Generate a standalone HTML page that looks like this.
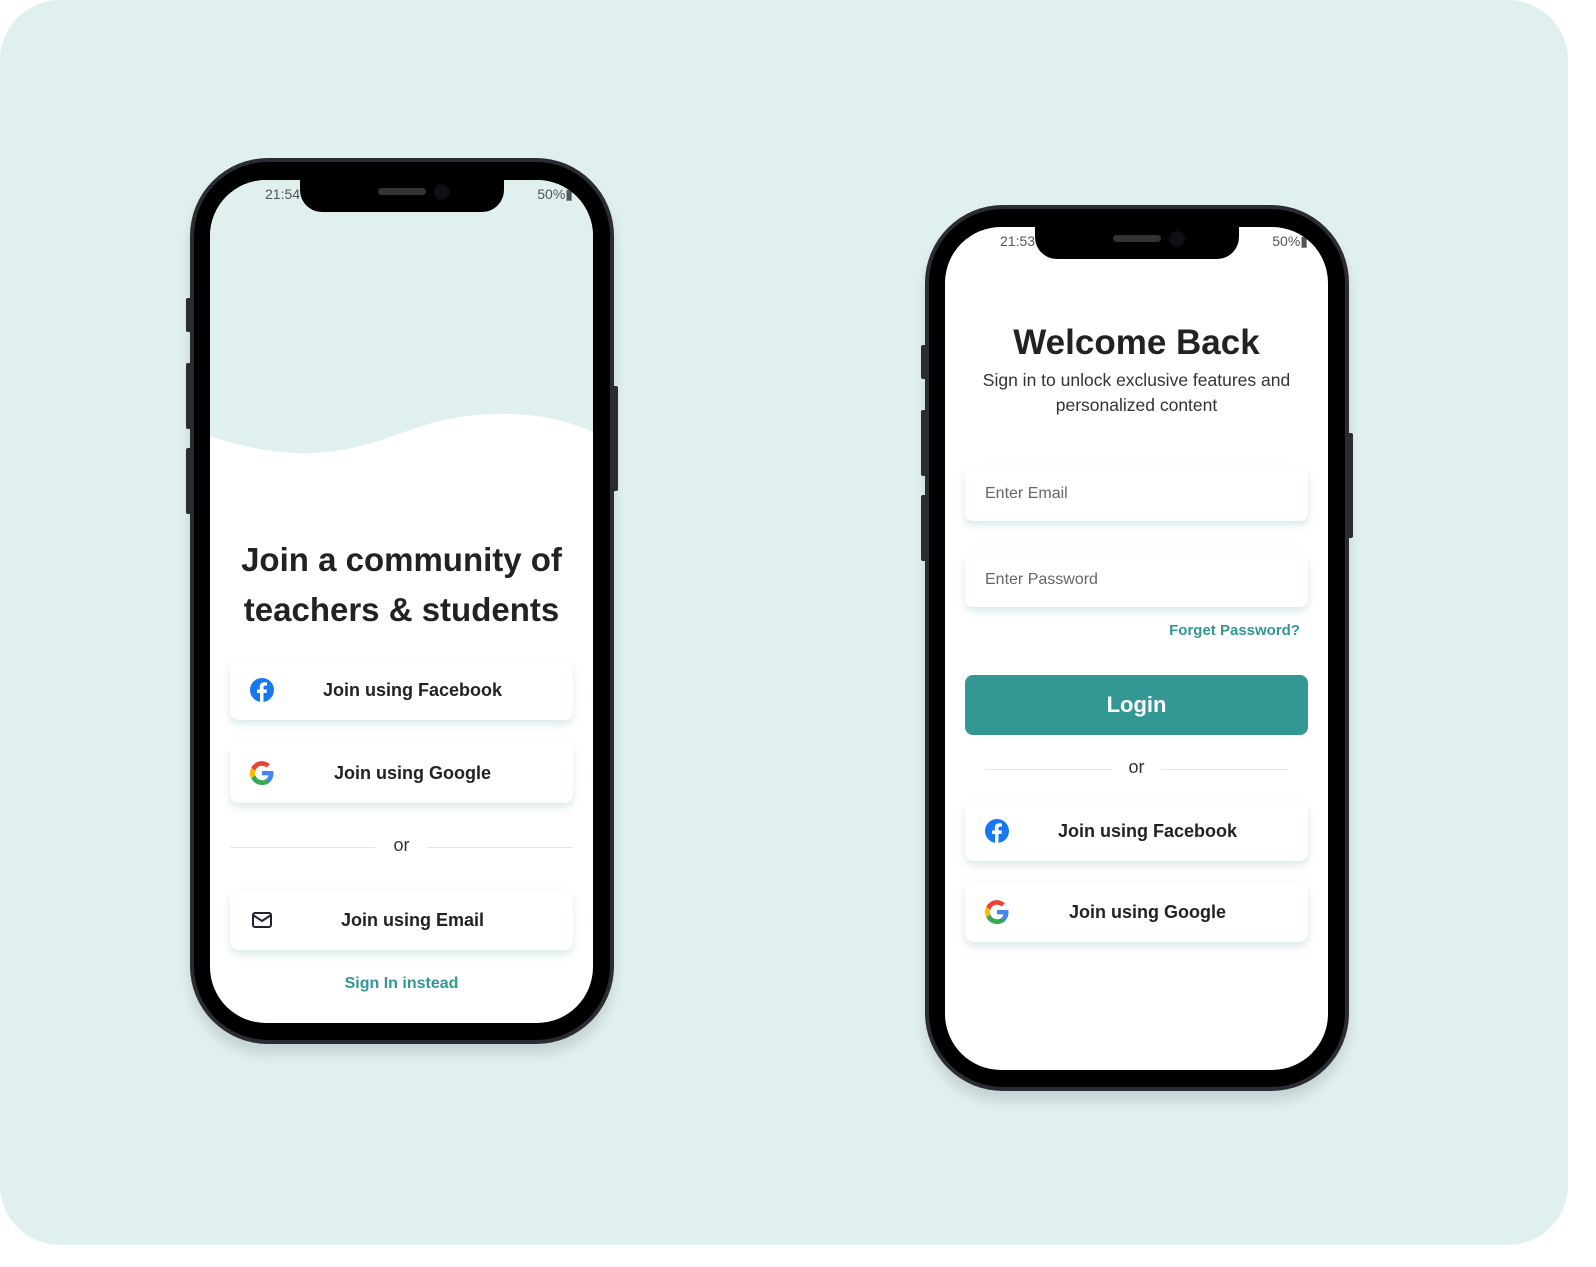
<!DOCTYPE html>
<html><head><meta charset="utf-8"><style>
*{margin:0;padding:0;box-sizing:border-box}
body{width:1596px;height:1267px;background:#fff;font-family:"Liberation Sans",sans-serif;position:relative;overflow:hidden}
.bg{position:absolute;left:0;top:0;width:1568px;height:1245px;background:#e0f0ef;border-radius:60px}
.phone{position:absolute;width:424px;height:886px;border-radius:78px;background:#2b2b33;box-shadow:0 10px 12px rgba(0,0,0,.12)}
.bezel{position:absolute;left:4px;top:4px;right:4px;bottom:4px;border-radius:74px;background:#000}
.screen{position:absolute;left:20px;top:22px;width:383px;height:843px;border-radius:56px;background:#fff;overflow:hidden}
.notch{position:absolute;left:90px;top:0;width:204px;height:32px;background:#000;border-radius:0 0 22px 22px}
.spk{position:absolute;left:78px;top:8px;width:48px;height:7px;border-radius:4px;background:#333}
.cam{position:absolute;left:134px;top:4px;width:16px;height:16px;border-radius:50%;background:#111;border:3px solid #0e0e16}
.time{position:absolute;left:55px;top:6px;font-size:14px;color:#555}
.stat{position:absolute;right:20px;top:6px;font-size:14px;color:#555}
.btn{position:absolute;left:20px;width:343px;height:60px;background:#fff;border-radius:9px;box-shadow:0 4px 8px rgba(150,190,190,.35);font-size:18px;font-weight:bold;color:#222;text-align:center;line-height:60px}
.btn svg{position:absolute;left:20px;top:18px}
.btn span{padding-left:22px}
.or{position:absolute;left:20px;width:343px;text-align:center;font-size:18px;color:#333}
.or:before,.or:after{content:"";position:absolute;top:12px;width:145px;height:1px;background:#e5e5e5}
.or:before{left:0}.or:after{right:0}
.or2:before,.or2:after{width:127px}
.inp{position:absolute;left:20px;width:343px;height:54px;background:#fff;border-radius:8px;box-shadow:0 4px 8px rgba(150,190,190,.35);font-size:16px;color:#666;line-height:54px;padding-left:20px}
.btns{position:absolute;width:6px;background:#2b2b33;border-radius:2px}
</style></head><body>
<div class="bg"></div>

<div class="phone" style="left:190px;top:158px">
 <div class="btns" style="left:-4px;top:140px;height:34px"></div>
 <div class="btns" style="left:-4px;top:205px;height:66px"></div>
 <div class="btns" style="left:-4px;top:290px;height:66px"></div>
 <div class="btns" style="right:-4px;top:228px;height:105px"></div>
 <div class="bezel"></div>
 <div class="screen">
  <svg style="position:absolute;left:0;top:0" width="383" height="300"><path d="M0 0H383V252C330 228 260 228 200 250C140 272 90 286 0 256Z" fill="#e0f0ef"/></svg>
  <div class="time">21:54</div><div class="stat">50%▮</div>
  <div class="notch"><div class="spk"></div><div class="cam"></div></div>
  <div style="position:absolute;left:0;width:383px;top:355px;text-align:center;font-size:33px;font-weight:bold;color:#222;line-height:50px">Join a community of<br>teachers &amp; students</div>
  <div class="btn" style="top:480px"><svg width="24" height="24" viewBox="0 0 24 24"><circle cx="12" cy="12" r="12" fill="#1877f2"/><path d="M13.5 24V15h3l.5-3.5h-3.5V9.3c0-1 .3-1.7 1.8-1.7H17V4.5c-.3 0-1.4-.2-2.7-.2-2.7 0-4.5 1.6-4.5 4.6v2.6H7V15h3v9z" fill="#fff"/></svg><span>Join using Facebook</span></div>
  <div class="btn" style="top:563px"><svg width="24" height="24" viewBox="0 0 24 24"><path d="M23.5 12.3c0-.8-.1-1.6-.2-2.3H12v4.4h6.5a5.6 5.6 0 0 1-2.4 3.6v3h3.9c2.2-2.1 3.5-5.2 3.5-8.7z" fill="#4285f4"/><path d="M12 24c3.2 0 6-1.1 8-2.9l-3.9-3c-1.1.7-2.5 1.2-4.1 1.2-3.1 0-5.8-2.1-6.7-5H1.3v3.1A12 12 0 0 0 12 24z" fill="#34a853"/><path d="M5.3 14.3a7.200 7.200 0 0 1 0-4.600V6.600H1.3a12 12 0 0 0 0 10.800z" fill="#fbbc05"/><path d="M12 4.8c1.8 0 3.3.6 4.600 1.8l3.400-3.400A12 12 0 0 0 1.3 6.600l4 3.100c.9-2.800 3.600-4.900 6.700-4.900z" fill="#ea4335"/></svg><span>Join using Google</span></div>
  <div class="or" style="top:655px">or</div>
  <div class="btn" style="top:710px"><svg width="24" height="24" viewBox="0 0 24 24" fill="none" stroke="#223" stroke-width="2"><rect x="3" y="5" width="18" height="14" rx="2"/><path d="M3 7l9 6 9-6"/></svg><span>Join using Email</span></div>
  <div style="position:absolute;left:0;width:383px;top:795px;text-align:center;font-size:16px;font-weight:bold;color:#319795">Sign In instead</div>
 </div>
</div>

<div class="phone" style="left:925px;top:205px">
 <div class="btns" style="left:-4px;top:140px;height:34px"></div>
 <div class="btns" style="left:-4px;top:205px;height:66px"></div>
 <div class="btns" style="left:-4px;top:290px;height:66px"></div>
 <div class="btns" style="right:-4px;top:228px;height:105px"></div>
 <div class="bezel"></div>
 <div class="screen">
  <div class="time">21:53</div><div class="stat">50%▮</div>
  <div class="notch"><div class="spk"></div><div class="cam"></div></div>
  <div style="position:absolute;left:0;width:383px;top:96px;text-align:center;font-size:35px;font-weight:bold;color:#222">Welcome Back</div>
  <div style="position:absolute;left:0;width:383px;top:141px;text-align:center;font-size:17.5px;color:#333;line-height:25px">Sign in to unlock exclusive features and<br>personalized content</div>
  <div class="inp" style="top:240px">Enter Email</div>
  <div class="inp" style="top:326px">Enter Password</div>
  <div style="position:absolute;right:28px;top:395px;font-size:15px;font-weight:bold;color:#319795">Forget Password?</div>
  <div style="position:absolute;left:20px;top:448px;width:343px;height:60px;border-radius:8px;background:#339893;color:#fff;font-size:22px;font-weight:bold;text-align:center;line-height:60px">Login</div>
  <div class="or or2" style="top:530px;left:40px;width:303px">or</div>
  <div class="btn" style="top:574px"><svg width="24" height="24" viewBox="0 0 24 24"><circle cx="12" cy="12" r="12" fill="#1877f2"/><path d="M13.5 24V15h3l.5-3.5h-3.5V9.3c0-1 .3-1.7 1.8-1.7H17V4.5c-.3 0-1.4-.2-2.7-.2-2.7 0-4.5 1.6-4.5 4.6v2.6H7V15h3v9z" fill="#fff"/></svg><span>Join using Facebook</span></div>
  <div class="btn" style="top:655px"><svg width="24" height="24" viewBox="0 0 24 24"><path d="M23.5 12.3c0-.8-.1-1.6-.2-2.3H12v4.4h6.5a5.6 5.6 0 0 1-2.4 3.6v3h3.9c2.2-2.1 3.5-5.2 3.5-8.7z" fill="#4285f4"/><path d="M12 24c3.2 0 6-1.1 8-2.9l-3.9-3c-1.1.7-2.5 1.2-4.1 1.2-3.1 0-5.8-2.1-6.7-5H1.3v3.1A12 12 0 0 0 12 24z" fill="#34a853"/><path d="M5.3 14.3a7.200 7.200 0 0 1 0-4.600V6.600H1.3a12 12 0 0 0 0 10.800z" fill="#fbbc05"/><path d="M12 4.8c1.8 0 3.3.6 4.600 1.8l3.400-3.400A12 12 0 0 0 1.3 6.600l4 3.100c.9-2.800 3.600-4.900 6.700-4.900z" fill="#ea4335"/></svg><span>Join using Google</span></div>
 </div>
</div>
</body></html>
